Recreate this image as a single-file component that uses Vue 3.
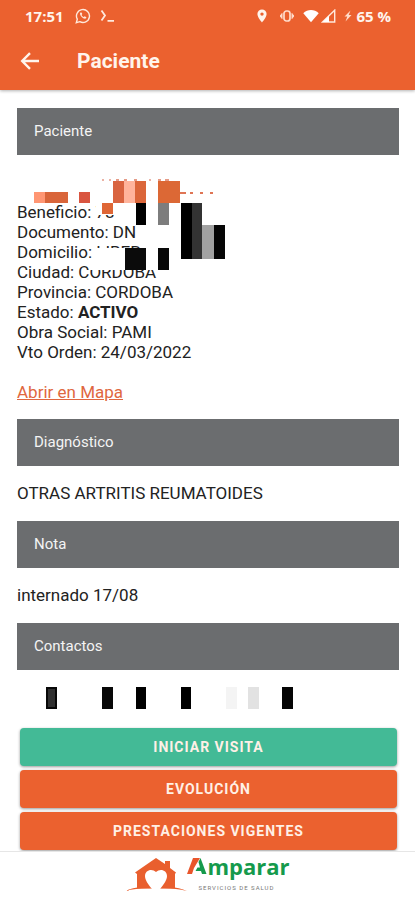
<script setup>
const patient = [
  { label: 'Beneficio', value: '78' },
  { label: 'Documento', value: 'DN' },
  { label: 'Domicilio', value: 'LIBER' },
  { label: 'Ciudad', value: 'CORDOBA' },
  { label: 'Provincia', value: 'CORDOBA' },
  { label: 'Estado', value: 'ACTIVO', strong: true },
  { label: 'Obra Social', value: 'PAMI' },
  { label: 'Vto Orden', value: '24/03/2022' }
]

// Privacy blocks: [x, y, width, height, colour]
const patientMask = [
  [79, 21, 22, 12, '#fff'],
  [78, 66, 50, 14, '#fff'],
  [73, 80, 68, 8, '#fff'],
  [17, 10, 11, 11, '#ff9673'],
  [28, 10, 23, 11, '#d9653a'],
  [62, 10, 11, 11, '#d95540'],
  [96, -1, 11, 22, '#d96440'],
  [107, -1, 11, 22, '#ffb49c'],
  [118, -1, 11, 22, '#db663a'],
  [141, -1, 22, 22, '#dc6835'],
  [85, 21, 11, 11, '#df6635'],
  [163, 10, 6, 2, '#df7555'],
  [173, 10, 3, 2, '#df7555'],
  [183, 10, 3, 2, '#df7555'],
  [193, 10, 3, 2, '#df7555'],
  [85, -3, 2, 2, '#ebb3a5'],
  [92, -3, 2, 2, '#ebb3a5'],
  [99, -3, 3, 2, '#e59b87'],
  [107, -3, 3, 2, '#e59b87'],
  [117, -3, 3, 2, '#e59b87'],
  [132, -3, 2, 2, '#ebb3a5'],
  [141, -3, 3, 2, '#e59b87'],
  [148, -3, 4, 2, '#e59b87'],
  [119, 21, 10, 22, '#000'],
  [141, 21, 11, 22, '#7d7d7d'],
  [164, 21, 11, 56, '#000'],
  [175, 21, 10, 56, '#333'],
  [185, 43, 12, 34, '#a2a2a2'],
  [197, 43, 11, 34, '#060606'],
  [108, 66, 21, 22, '#0b0b0b'],
  [141, 66, 11, 22, '#080808']
]
const contactMask = [
  [29, 0, 11, 22, '#080808'],
  [31, 2, 7, 18, '#303030'],
  [85, 0, 11, 22, '#080808'],
  [119, 0, 10, 22, '#000'],
  [164, 0, 10, 22, '#000'],
  [209, 0, 11, 22, '#f4f4f4'],
  [231, 0, 11, 22, '#e2e2e2'],
  [265, 0, 11, 22, '#050505']
]
</script>

<template>
  <div class="screen">
    <header class="top">
      <div class="status">
        <span class="clock">17:51</span>
        <svg class="wa" width="16" height="16" viewBox="0 0 16 16" fill="none" stroke="#ffe9dc" stroke-width="1.4">
          <path d="M1.3 14.7l1-3.5A6.5 6.5 0 1 1 4.8 13.700z" />
          <path d="M5.500 4.500c-1 1-.5 2.600 1 4.200s3.500 2.600 4.600 1.500l.3-1-1.700-.9-.9.800c-1-.4-1.800-1.200-2.200-2.200l.7-.8-.8-1.700z" fill="#ffe9dc" stroke="none" />
        </svg>
        <svg class="term" width="15" height="14" viewBox="0 0 15 14" fill="none" stroke="#ffe9dc" stroke-width="1.800">
          <path d="M1.500 1.500l3.500 5L1.500 11.500M7.500 11.800H14" />
        </svg>
        <span class="fill"></span>
        <svg class="pin" width="10" height="14" viewBox="0 0 10 14">
          <path fill="#fff4ec" fill-rule="evenodd" d="M5 .5A4.600 4.600 0 0 0 .4 5.100C.4 8.500 5 13.500 5 13.500s4.600-5 4.600-8.400A4.600 4.600 0 0 0 5 .5zm0 2.900a1.700 1.700 0 1 1 0 3.400 1.700 1.700 0 0 1 0-3.400z" />
        </svg>
        <svg class="vib" width="16" height="14" viewBox="0 0 16 14" fill="none" stroke="#ffdccb" stroke-width="1.700">
          <rect x="5" y="2" width="6" height="10" rx="2.500" />
          <path d="M3 4.500L1.200 7 3 9.500zM13 4.500L14.800 7 13 9.500z" fill="#ffdccb" stroke-width="1" />
        </svg>
        <svg class="wifi" width="16" height="14" viewBox="0 0 16 14">
          <path fill="#fff" d="M.3 4.300C4.500 0 11.500 0 15.700 4.300L8 13.300z" />
        </svg>
        <svg class="cell" width="15" height="14" viewBox="0 0 15 14">
          <path d="M1.500 13L13.700 1.200V13z" fill="none" stroke="#ffe9dc" stroke-width="1.400" />
          <path d="M1.500 13L8 6.700V13z" fill="#fff" />
        </svg>
        <svg class="bolt" width="8" height="12" viewBox="0 0 8 12">
          <path d="M6.500.5L.5 6.500h2.800L1.500 11.500 7.500 5H4.700z" fill="#ffdccb" />
        </svg>
        <span class="clock">65 %</span>
      </div>
      <div class="toolbar">
        <button class="back" type="button" aria-label="Volver">
          <svg width="20" height="18" viewBox="0 0 20 18" fill="none" stroke="#fff4ec" stroke-width="2.400">
            <path d="M19 9H2.500M10 1.200L2.200 9 10 16.800" />
          </svg>
        </button>
        <h1>Paciente</h1>
      </div>
    </header>

    <main>
      <h2>Paciente</h2>
      <section class="patient">
        <p v-for="row in patient" :key="row.label">
          {{ row.label }}: <strong v-if="row.strong">{{ row.value }}</strong><template v-else>{{ row.value }}</template>
        </p>
        <a class="map" href="#mapa">Abrir en Mapa</a>
        <svg class="mask" width="220" height="110" viewBox="0 0 220 110" shape-rendering="crispEdges" aria-hidden="true">
          <rect v-for="(b, i) in patientMask" :key="i" :x="b[0]" :y="b[1]" :width="b[2]" :height="b[3]" :fill="b[4]" />
        </svg>
      </section>

      <h2>Diagnóstico</h2>
      <p class="text">OTRAS ARTRITIS REUMATOIDES</p>
      <h2>Nota</h2>
      <p class="text">internado 17/08</p>
      <h2>Contactos</h2>
      <svg class="contacts" width="280" height="22" viewBox="0 0 280 22" shape-rendering="crispEdges" aria-hidden="true">
        <rect v-for="(b, i) in contactMask" :key="i" :x="b[0]" :y="b[1]" :width="b[2]" :height="b[3]" :fill="b[4]" />
      </svg>

      <div class="actions">
        <button class="go" type="button">INICIAR VISITA</button>
        <button type="button">EVOLUCIÓN</button>
        <button type="button">PRESTACIONES VIGENTES</button>
      </div>
    </main>

    <footer>
      <svg width="62" height="36" viewBox="0 0 62 36" aria-hidden="true">
        <path fill="#e95f2e" d="M10 15.500L31 1l9 6V4h5v7l6 4.500-1 1.500V31.500H12V17z" />
        <path fill="#fff" d="M27 32c-4-5-7-9-7-13 0-6 7-8 11-4 4-4 11-2 11 4 0 4-3 8-7 13z" />
        <path fill="#e95f2e" d="M0 34c8-4 18-5 27-2.500C18 31 9 32 0 34zM35 31.500c9-2.500 19-1.500 27 2.500-9-2-18-3-27-2.500z" />
      </svg>
      <div class="brand">
        <div class="word">
          <svg width="20" height="18" viewBox="0 0 20 18" aria-hidden="true">
            <path fill="#e9552b" d="M0 17L6 1h7L7 11l-2 6z" />
            <path fill="#159a4c" d="M13.500 1L19.500 17H15l-1-3H8.500l2-3.500H13L11.500 5z" />
          </svg>
          <span>mparar</span>
        </div>
        <small>SERVICIOS DE SALUD</small>
      </div>
    </footer>
  </div>
</template>

<style>
body {
  margin: 0;
  background: #fff;
}
</style>

<style scoped>
.screen {
  font-family: Roboto, "Liberation Sans", sans-serif;
  font-size: 17px;
  line-height: 20px;
  color: #222;
  min-height: 100vh;
  display: flex;
  flex-direction: column;
}
h1, h2, p {
  margin: 0;
}
.top {
  background: #eb612f;
  color: #fff4ec;
  height: 90px;
  box-shadow: 0 1px 3px rgba(0, 0, 0, 0.3);
}
.status {
  display: flex;
  align-items: center;
  height: 32px;
  padding: 0 24px 0 25px;
}
.clock {
  font-family: "Open Sans", "Noto Sans", sans-serif;
  font-size: 15px;
  font-weight: 700;
  white-space: nowrap;
}
.wa { margin-left: 11px; }
.term { margin-left: 9px; }
.fill { flex: 1; }
.vib { margin-left: 12px; }
.wifi { margin-left: 8px; }
.cell { margin-left: 2px; }
.bolt { margin: 0 4px 0 8px; }
.toolbar {
  display: flex;
  align-items: center;
  height: 58px;
  padding: 0 20px;
  gap: 37px;
}
.back {
  display: flex;
  border: 0;
  padding: 0;
  background: none;
}
h1 {
  font-size: 21px;
  line-height: 24px;
  font-weight: 700;
}
main {
  flex: 1;
  padding: 18px 16px 0 17px;
}
h2 {
  display: flex;
  align-items: center;
  box-sizing: border-box;
  height: 47px;
  padding: 0 17px 1px;
  background: #6b6d6f;
  color: #f4f4f4;
  font-size: 15px;
  font-weight: 400;
}
.patient {
  position: relative;
  padding: 47px 0 17px;
}
.map {
  display: block;
  width: fit-content;
  margin-top: 20px;
  color: #df6740;
}
.mask {
  position: absolute;
  left: 0;
  top: 27px;
  overflow: visible;
}
.text {
  padding: 17px 0 18px;
}
.contacts {
  display: block;
  padding-top: 17px;
}
.actions {
  display: flex;
  flex-direction: column;
  gap: 4px;
  padding: 19px 2px 0 3px;
}
.actions button {
  height: 38px;
  border: 0;
  border-radius: 4px;
  background: #eb612f;
  color: #fff0e6;
  font-family: inherit;
  font-size: 14px;
  font-weight: 700;
  letter-spacing: 1px;
  box-shadow: 0 1px 3px rgba(0, 0, 0, 0.4);
}
.actions .go {
  background: #43ba96;
}
footer {
  display: flex;
  justify-content: center;
  height: 49px;
  padding-top: 5px;
  box-sizing: border-box;
  border-top: 1px solid #e6e6e6;
  background: #fff;
}
.word {
  display: flex;
  height: 24px;
  color: #159a4c;
  font-family: "Open Sans", sans-serif;
  font-size: 22px;
  line-height: 18px;
  font-weight: 700;
}
.brand small {
  display: block;
  padding-left: 11px;
  color: #777;
  font-size: 6px;
  line-height: 14px;
  letter-spacing: 1px;
}
</style>
